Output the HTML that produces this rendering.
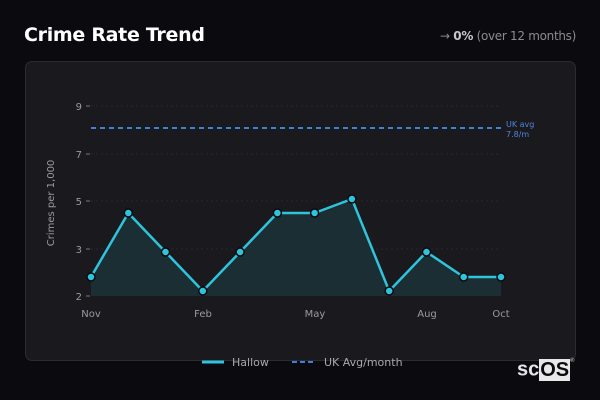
<!DOCTYPE html>
<html><head><meta charset="utf-8"><style>
html,body{margin:0;padding:0;background:#0b0a0f;width:600px;height:400px;overflow:hidden;font-family:"DejaVu Sans","Liberation Sans",sans-serif}
.title{position:absolute;left:24px;top:24px;color:#fff;font-weight:bold;font-size:19px;letter-spacing:-0.3px}
.trend{position:absolute;right:24px;top:29px;color:#8a8a90;font-size:12px;letter-spacing:-0.3px}
.trend b{color:#c8c8cc}
.card{position:absolute;left:25px;top:61px;width:549px;height:298px;background:#1a191e;border:1px solid #2c2b31;border-radius:7px}
.logo{position:absolute;left:517px;top:355px;font-family:"Liberation Sans",sans-serif;font-weight:bold;font-size:20px;color:#e6e6e6;line-height:24px}
.logo span{background:#e8e8e8;color:#0b0a0f;padding:0 1px}
.logo sup{font-size:6px;color:#aaa;position:relative;top:-6px}
</style></head><body>
<div class="title">Crime Rate Trend</div>
<div class="trend">→ <b>0%</b> (over 12 months)</div>
<div class="card"></div>
<svg width="600" height="400" style="position:absolute;left:0;top:0" font-family="DejaVu Sans, Liberation Sans, sans-serif">
<g stroke="#28272d" stroke-dasharray="2,3" stroke-width="1">
<line x1="91" y1="106" x2="501" y2="106"/><line x1="91" y1="154" x2="501" y2="154"/><line x1="91" y1="201" x2="501" y2="201"/><line x1="91" y1="249" x2="501" y2="249"/>
</g>
<g stroke="#777" stroke-width="1">
<line x1="86" y1="106" x2="90" y2="106"/><line x1="86" y1="154" x2="90" y2="154"/><line x1="86" y1="201" x2="90" y2="201"/><line x1="86" y1="249" x2="90" y2="249"/><line x1="86" y1="296" x2="90" y2="296"/>
</g>
<g fill="#9a9aa0" font-size="10" text-anchor="end">
<text x="82" y="110">9</text><text x="82" y="158">7</text><text x="82" y="205">5</text><text x="82" y="253">3</text><text x="82" y="300">2</text>
</g>
<text transform="translate(54,203) rotate(-90)" fill="#9a9aa0" font-size="10" text-anchor="middle">Crimes per 1,000</text>
<g fill="#9a9aa0" font-size="10" text-anchor="middle">
<text x="91" y="317">Nov</text><text x="203" y="317">Feb</text><text x="315" y="317">May</text><text x="427" y="317">Aug</text><text x="501" y="317">Oct</text>
</g>
<polygon fill="#1a2e33" points="91,296 91,277 128.3,213 165.5,252 202.8,291 240.1,252 277.4,213 314.6,213 351.9,199 389.2,291 426.5,252 463.7,277 501,277 501,296"/>
<line x1="91" y1="128" x2="501" y2="128" stroke="#3f7fd8" stroke-width="2" stroke-dasharray="5,4"/>
<text x="506" y="127" fill="#4a86dc" font-size="8">UK avg</text>
<text x="506" y="137" fill="#4a86dc" font-size="8">7.8/m</text>
<polyline fill="none" stroke="#2ec4dc" stroke-width="2.5" stroke-linejoin="round" points="91,277 128.3,213 165.5,252 202.8,291 240.1,252 277.4,213 314.6,213 351.9,199 389.2,291 426.5,252 463.7,277 501,277"/>
<g fill="#2ec4dc" stroke="#0b0a0f" stroke-width="1.5">
<circle cx="91" cy="277" r="4"/><circle cx="128.3" cy="213" r="4"/><circle cx="165.5" cy="252" r="4"/><circle cx="202.8" cy="291" r="4"/><circle cx="240.1" cy="252" r="4"/><circle cx="277.4" cy="213" r="4"/><circle cx="314.6" cy="213" r="4"/><circle cx="351.9" cy="199" r="4"/><circle cx="389.2" cy="291" r="4"/><circle cx="426.5" cy="252" r="4"/><circle cx="463.7" cy="277" r="4"/><circle cx="501" cy="277" r="4"/>
</g>
<line x1="202" y1="362" x2="224" y2="362" stroke="#2ec4dc" stroke-width="3"/>
<text x="232" y="366" fill="#a8a8ac" font-size="11">Hallow</text>
<line x1="292" y1="362" x2="316" y2="362" stroke="#3f7fd8" stroke-width="2" stroke-dasharray="5,3"/>
<text x="324" y="366" fill="#a8a8ac" font-size="11">UK Avg/month</text>
</svg>
<div class="logo">sc<span>OS</span><sup>®</sup></div>
</body></html>
